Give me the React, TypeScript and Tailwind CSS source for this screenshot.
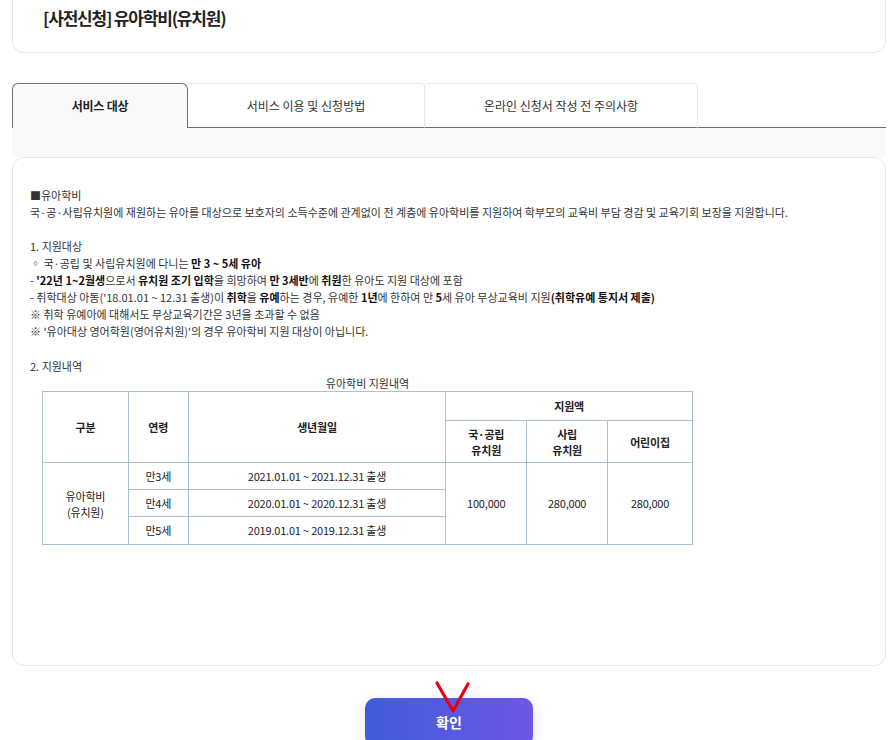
import React from "react";

const font = "font-['Noto_Sans_CJK_KR','Noto_Sans',sans-serif]";

function Tabs() {
  return (
    <div className="flex h-[45px] mx-[12px] mr-[10px]">
      <div className="w-[176px] shrink-0 flex items-center justify-center bg-[#f9f9f9] border-t border-l border-r border-[#707070] rounded-t-[6px] text-[12px] font-bold text-[#222] tracking-[-0.2px]">
        서비스 대상
      </div>
      <div className="w-[237px] shrink-0 flex items-center justify-center bg-white border-t border-r border-[#e8e8e8] border-b border-b-[#707070] rounded-tr-[4px] text-[12px] text-[#333]">
        서비스 이용 및 신청방법
      </div>
      <div className="w-[273px] shrink-0 flex items-center justify-center bg-white border-t border-r border-[#e8e8e8] border-b border-b-[#707070] rounded-t-[4px] text-[12px] text-[#333]">
        온라인 신청서 작성 전 주의사항
      </div>
      <div className="flex-1 border-b border-[#707070]" />
    </div>
  );
}

function SupportTable() {
  const td = "border border-[#a9c2cd] text-center align-middle";
  return (
    <div className="ml-[12px] w-[651px]">
      <div className="h-[16px] leading-[16px] text-center text-[11px]">유아학비 지원내역</div>
      <table className="w-[651px] border-collapse text-[11px] tracking-[-0.2px] text-[#222]">
        <colgroup>
          <col className="w-[86px]" />
          <col className="w-[60px]" />
          <col className="w-[258px]" />
          <col className="w-[81px]" />
          <col className="w-[81px]" />
          <col className="w-[85px]" />
        </colgroup>
        <tbody>
          <tr className="h-[29px] font-bold">
            <td rowSpan={2} className={td}>구분</td>
            <td rowSpan={2} className={td}>연령</td>
            <td rowSpan={2} className={td}>생년월일</td>
            <td colSpan={3} className={td}>지원액</td>
          </tr>
          <tr className="h-[42px] font-bold leading-[16px]">
            <td className={td}>국·공립<br />유치원</td>
            <td className={td}>사립<br />유치원</td>
            <td className={td}>어린이집</td>
          </tr>
          <tr className="h-[27px]">
            <td rowSpan={3} className={`${td} leading-[16px]`}>유아학비<br />(유치원)</td>
            <td className={td}>만3세</td>
            <td className={td}>2021.01.01 ~ 2021.12.31 출생</td>
            <td rowSpan={3} className={td}>100,000</td>
            <td rowSpan={3} className={td}>280,000</td>
            <td rowSpan={3} className={td}>280,000</td>
          </tr>
          <tr className="h-[27px]">
            <td className={td}>만4세</td>
            <td className={td}>2020.01.01 ~ 2020.12.31 출생</td>
          </tr>
          <tr className="h-[28px]">
            <td className={td}>만5세</td>
            <td className={td}>2019.01.01 ~ 2019.12.31 출생</td>
          </tr>
        </tbody>
      </table>
    </div>
  );
}

export default function App() {
  return (
    <div className={`${font} w-[896px] h-[740px] overflow-hidden bg-white text-[#333] relative`}>
      {/* title card, top is scrolled out of view */}
      <div className="ml-[12px] mr-[10px] h-[53px] border-l border-r border-b border-[#e8e8e8] rounded-b-[12px] pl-[30px] pt-[6px]">
        <h1 className="text-[17px] leading-[24px] font-bold text-[#222] tracking-[-1.2px]">[사전신청] 유아학비(유치원)</h1>
      </div>

      <div className="h-[30px]" />
      <Tabs />

      <div className="mx-[12px] mr-[10px] h-[29px] bg-[#f9f9f9]" />

      <div className="ml-[12px] mr-[10px] h-[509px] border border-[#e8e8e8] rounded-[12px] bg-white px-[17px] pt-[29px] text-[11px] leading-[17px] text-[#333]">
        <p>■유아학비</p>
        <p>국·공·사립유치원에 재원하는 유아를 대상으로 보호자의 소득수준에 관계없이 전 계층에 유아학비를 지원하여 학부모의 교육비 부담 경감 및 교육기회 보장을 지원합니다.</p>
        <p className="h-[17px]" />
        <p>1. 지원대상</p>
        <p>◦ 국·공립 및 사립유치원에 다니는 <b className="text-[#111]">만 3 ~ 5세 유아</b></p>
        <p>
          - <b className="text-[#111]">'22년 1~2월생</b>으로서 <b className="text-[#111]">유치원 조기 입학</b>을 희망하여{" "}
          <b className="text-[#111]">만 3세반</b>에 <b className="text-[#111]">취원</b>한 유아도 지원 대상에 포함
        </p>
        <p>
          - 취학대상 아동('18.01.01 ~ 12.31 출생)이 <b className="text-[#111]">취학</b>을 <b className="text-[#111]">유예</b>하는 경우, 유예한{" "}
          <b className="text-[#111]">1년</b>에 한하여 만 <b className="text-[#111]">5</b>세 유아 무상교육비 지원
          <b className="text-[#111]">(취학유예 통지서 제출)</b>
        </p>
        <p>※ 취학 유예아에 대해서도 무상교육기간은 3년을 초과할 수 없음</p>
        <p>※ '유아대상 영어학원(영어유치원)'의 경우 유아학비 지원 대상이 아닙니다.</p>
        <p className="h-[18px]" />
        <p>2. 지원내역</p>
        <SupportTable />
      </div>

      <div className="flex justify-center mt-[32px] pl-[2px]">
        <button className="w-[168px] h-[48px] rounded-[10px] bg-gradient-to-r from-[#3d5cd8] to-[#6d57e8] text-white text-[14px] font-bold shadow-[0_4px_14px_rgba(90,90,220,0.18)]">
          확인
        </button>
      </div>

      {/* red check mark annotation */}
      <svg className="absolute left-[432px] top-[680px]" width="42" height="36" viewBox="0 0 42 36">
        <path d="M5 3 L21 31 L36 4" fill="none" stroke="#e60012" strokeWidth="3.2" strokeLinecap="round" strokeLinejoin="round" />
      </svg>
    </div>
  );
}
